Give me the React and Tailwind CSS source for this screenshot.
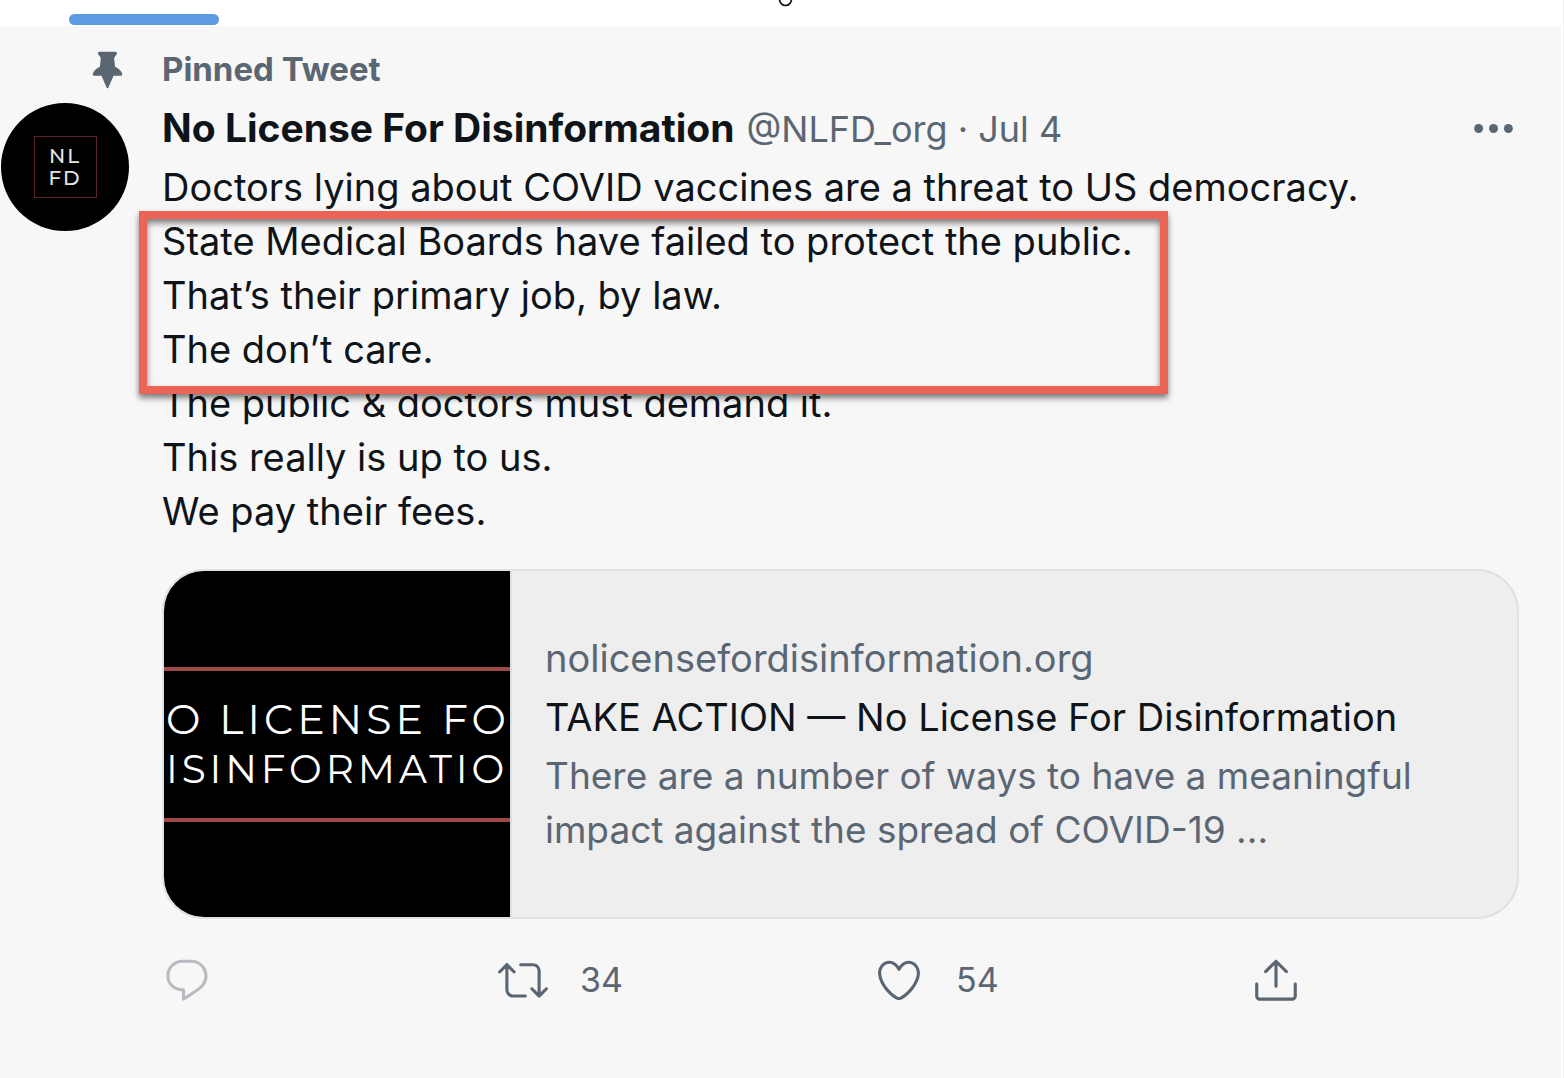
import React from "react";

const ICONS = {
  pin: ["M20.235 14.61c-.375-1.745-2.342-3.506-4.01-4.125l-.544-4.948 1.495-2.242c.157-.236.172-.538.037-.787-.134-.25-.392-.403-.675-.403h-9.14c-.284 0-.542.154-.676.403-.134.25-.12.553.038.788l1.498 2.247-.484 4.943c-1.668.62-3.633 2.38-4.004 4.116-.04.16-.016.404.132.594.103.132.304.29.68.29H8.64l2.904 6.712c.078.184.26.302.458.302s.38-.118.46-.302l2.903-6.713h4.057c.376 0 .576-.156.68-.286.146-.188.172-.434.135-.59z"],
  reply: ["M14.046 2.242l-4.148-.01h-.002c-4.374 0-7.8 3.427-7.8 7.802 0 4.098 3.186 7.206 7.465 7.37v3.828c0 .108.044.286.12.403.142.225.384.347.632.347.138 0 .277-.038.402-.118.264-.168 6.473-4.14 8.088-5.506 1.902-1.61 3.04-3.97 3.043-6.312v-.017c-.006-4.367-3.43-7.787-7.8-7.788zm3.787 12.972c-1.134.96-4.862 3.405-6.772 4.643V16.67c0-.414-.335-.75-.75-.75h-.396c-3.66 0-6.318-2.476-6.318-5.886 0-3.534 2.768-6.302 6.3-6.302l4.147.01h.002c3.532 0 6.3 2.766 6.302 6.296-.003 1.91-.942 3.844-2.514 5.176z"],
  retweet: ["M23.77 15.67c-.292-.293-.767-.293-1.06 0l-2.22 2.22V7.65c0-2.068-1.683-3.75-3.75-3.75h-5.85c-.414 0-.75.336-.75.75s.336.75.75.75h5.85c1.24 0 2.25 1.01 2.25 2.25v10.24l-2.22-2.22c-.293-.293-.768-.293-1.06 0s-.294.768 0 1.06l3.5 3.5c.145.147.337.22.53.22s.383-.072.53-.22l3.5-3.5c.294-.292.294-.767 0-1.06zm-10.66 3.28H7.26c-1.24 0-2.25-1.01-2.25-2.25V6.46l2.22 2.22c.148.147.34.22.532.22s.384-.073.53-.22c.293-.293.293-.768 0-1.06l-3.5-3.5c-.293-.294-.768-.294-1.06 0l-3.5 3.5c-.294.292-.294.767 0 1.06s.767.293 1.06 0l2.22-2.22V16.7c0 2.068 1.683 3.75 3.75 3.75h5.85c.414 0 .75-.336.75-.75s-.337-.75-.75-.75z"],
  like: ["M12 21.638h-.014C9.403 21.59 1.95 14.856 1.95 8.478c0-3.064 2.525-5.754 5.403-5.754 2.29 0 3.83 1.58 4.646 2.73.814-1.148 2.354-2.73 4.645-2.73 2.88 0 5.404 2.69 5.404 5.755 0 6.376-7.454 13.11-10.037 13.157H12zM7.354 4.225c-2.08 0-3.903 1.988-3.903 4.255 0 5.74 7.034 11.596 8.55 11.658 1.518-.062 8.55-5.917 8.55-11.658 0-2.267-1.823-4.255-3.903-4.255-2.528 0-3.94 2.936-3.952 2.965-.23.562-1.156.562-1.387 0-.014-.03-1.425-2.965-3.954-2.965z"],
  share: [
    "M17.53 7.47l-5-5c-.293-.293-.768-.293-1.06 0l-5 5c-.294.293-.294.768 0 1.06s.767.294 1.06 0l3.72-3.72V15c0 .414.336.75.75.75s.75-.336.75-.75V4.81l3.72 3.72c.146.147.338.22.53.22s.384-.072.53-.22c.293-.293.293-.767 0-1.06z",
    "M19.708 21.944H4.292C3.028 21.944 2 20.916 2 19.652V14c0-.414.336-.75.75-.75s.75.336.75.75v5.652c0 .437.355.792.792.792h15.416c.437 0 .792-.355.792-.792V14c0-.414.336-.75.75-.75s.75.336.75.75v5.652c0 1.264-1.028 2.292-2.292 2.292z",
  ],
};

function Icon({ name, className }) {
  return (
    <svg viewBox="0 0 24 24" fill="currentColor" aria-hidden="true" className={className}>
      {ICONS[name].map((d) => (
        <path key={d} d={d} />
      ))}
    </svg>
  );
}

function Action({ name, label, count, className = "" }) {
  return (
    <button type="button" aria-label={label} className={`flex h-[51px] items-center gap-8 justify-self-start ${className}`}>
      <Icon name={name} className="size-[50px] shrink-0" />
      {count && <span className="text-[34px] leading-[51px]">{count}</span>}
    </button>
  );
}

function TabBar() {
  return (
    <header className="flex h-[26px] items-start justify-between bg-white">
      <div className="mt-3.5 ml-[69px] h-[11px] w-[150px] rounded-full bg-[#5c9ae3]" />
      <svg viewBox="0 0 16 8" className="mr-[767px] h-2 w-4 shrink-0" fill="none" stroke="#111" strokeWidth="1.7" aria-hidden="true">
        <path d="M1.5 -1a6 6.5 0 0 0 12 0" />
      </svg>
    </header>
  );
}

function Avatar() {
  return (
    <div className="ml-px flex size-32 items-center justify-center rounded-full bg-black">
      <div className="flex h-[62px] w-[63px] flex-col items-center justify-center border border-[#5a2228] font-['Montserrat','Lato',sans-serif] text-xl leading-[22px] font-medium tracking-widest text-[#e4e4e4]">
        <span>NL</span>
        <span>FD</span>
      </div>
    </div>
  );
}

function LinkCard() {
  return (
    <a href="#nlfd" className="mt-[31px] flex h-[350px] overflow-hidden rounded-[42px] border-2 border-[#dce1e5] bg-[#eeeeee]">
      <div className="flex w-[348px] shrink-0 flex-col justify-center border-r-2 border-[#dce1e5] bg-black">
        <div className="flex h-[155px] flex-col justify-center border-y-4 border-[#9c4a48] pl-0.5 font-['Montserrat','Lato',sans-serif] leading-[50px] whitespace-nowrap text-white">
          <span className="text-[41px] tracking-widest">O LICENSE FO</span>
          <span className="text-[39px] tracking-widest">ISINFORMATIO</span>
        </div>
      </div>
      <div className="flex min-w-0 flex-1 flex-col justify-center gap-[5px] px-[33px] text-[38px] leading-[54px]">
        <span className="text-[#5b6673]">nolicensefordisinformation.org</span>
        <span className="text-[#0f1419]">TAKE ACTION — No License For Disinformation</span>
        <span className="text-[37px] text-[#5b6673]">
          There are a number of ways to have a meaningful
          <br />
          impact against the spread of COVID-19 ...
        </span>
      </div>
    </a>
  );
}

export default function App() {
  return (
    <div className="bg-white font-['Inter',sans-serif]">
      <div className="border-r border-[#eff3f4] pr-0.5">
        <TabBar />
        <main className="min-h-[calc(100vh-26px)] bg-[#f7f7f7] pt-[22px]">
          <article className="grid grid-cols-[129px_1fr] gap-x-[33px] pr-[42px]">
            <Icon name="pin" className="size-[43px] justify-self-end text-[#5b6673]" />
            <p className="text-[33px] leading-[43px] font-bold text-[#5b6673]">Pinned Tweet</p>

            <div className="pt-3">
              <Avatar />
            </div>
            <div className="pt-2.5">
              <div className="flex items-center justify-between text-[#5b6673]">
                <p className="flex items-baseline gap-3 leading-[54px] whitespace-nowrap">
                  <b className="text-[39px] font-bold text-[#0f1419]">No License For Disinformation</b>
                  <span className="text-4xl leading-[54px]">@NLFD_org · Jul 4</span>
                </p>
                <button type="button" aria-label="More" className="size-[51px] shrink-0">
                  <svg viewBox="0 0 24 24" fill="currentColor" aria-hidden="true">
                    <circle cx="5" cy="12" r="2.1" />
                    <circle cx="12" cy="12" r="2.1" />
                    <circle cx="19" cy="12" r="2.1" />
                  </svg>
                </button>
              </div>
              <div className="relative mt-1 text-[38px] leading-[54px] text-[#0f1419]">
                <p>Doctors lying about COVID vaccines are a threat to US democracy.</p>
                <p>State Medical Boards have failed to protect the public.</p>
                <p>That’s their primary job, by law.</p>
                <p>The don’t care.</p>
                <p>The public &amp; doctors must demand it.</p>
                <p>This really is up to us.</p>
                <p>We pay their fees.</p>
                <div className="absolute top-[51px] -left-[23px] h-[183px] w-[1029px] border-8 border-[#ec6455] shadow-[0_4px_6px_rgba(0,0,0,0.5),inset_0_4px_6px_rgba(0,0,0,0.5)]" />
              </div>
              <LinkCard />
              <div className="mt-[35px] grid grid-cols-[336fr_376fr_377fr_268fr] text-[#5b6673]">
                <Action name="reply" label="Reply" className="opacity-40" />
                <Action name="retweet" label="Retweet" count="34" />
                <Action name="like" label="Like" count="54" />
                <Action name="share" label="Share" />
              </div>
            </div>
          </article>
        </main>
      </div>
    </div>
  );
}
